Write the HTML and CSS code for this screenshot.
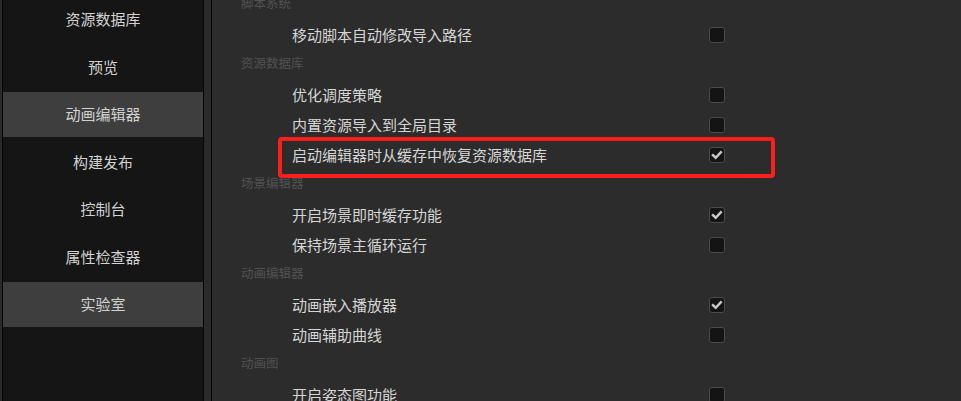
FILE: index.html
```html
<!DOCTYPE html>
<html lang="zh-CN">
<head>
<meta charset="UTF-8" />
<title>偏好设置 - 实验室</title>
<link rel="stylesheet" href="styles.css">
</head>
<body>

<div class="edge"></div>

<!-- 左侧导航 -->
<nav class="sidebar">
  <div class="nav-item">资源数据库</div>
  <div class="nav-item">预览</div>
  <div class="nav-item active">动画编辑器</div>
  <div class="nav-item">构建发布</div>
  <div class="nav-item">控制台</div>
  <div class="nav-item">属性检查器</div>
  <div class="nav-item active">实验室</div>
</nav>

<div class="gutter"></div>

<!-- 设置列表 -->
<main class="main">
  <div class="group-title">脚本系统</div>
  <div class="row"><span class="label">移动脚本自动修改导入路径</span><span class="box"></span></div>

  <div class="group-title">资源数据库</div>
  <div class="row"><span class="label">优化调度策略</span><span class="box"></span></div>
  <div class="row"><span class="label">内置资源导入到全局目录</span><span class="box"></span></div>
  <div class="row"><span class="label">启动编辑器时从缓存中恢复资源数据库</span><span class="box checked"><svg viewBox="0 0 16 16"><path d="M3.4 8.2 L6.5 11.1 L12.4 4.8"/></svg></span></div>

  <div class="group-title">场景编辑器</div>
  <div class="row"><span class="label">开启场景即时缓存功能</span><span class="box checked"><svg viewBox="0 0 16 16"><path d="M3.4 8.2 L6.5 11.1 L12.4 4.8"/></svg></span></div>
  <div class="row"><span class="label">保持场景主循环运行</span><span class="box"></span></div>

  <div class="group-title">动画编辑器</div>
  <div class="row"><span class="label">动画嵌入播放器</span><span class="box checked"><svg viewBox="0 0 16 16"><path d="M3.4 8.2 L6.5 11.1 L12.4 4.8"/></svg></span></div>
  <div class="row"><span class="label">动画辅助曲线</span><span class="box"></span></div>

  <div class="group-title">动画图</div>
  <div class="row"><span class="label">开启姿态图功能</span><span class="box"></span></div>
</main>

<!-- 红色标注框 -->
<div class="mark"></div>

</body>
</html>
```

FILE: styles.css
```css
:root {
  --main-bg: #2c2c2c;
  --side-bg: #151515;
  --active-bg: #3e3e3e;
  --text: #d6d6d6;
  --muted: #525252;
}

body {
  margin: 0;
  height: 401px;
  display: flex;
  overflow: hidden;
  background: var(--main-bg);
  font-family: "Noto Sans CJK SC", "Noto Sans", sans-serif;
  position: relative;
}

.edge {
  width: 2px;
  flex-shrink: 0;
  background: #2a2a2a;
  border-right: 1px solid #050505;
}

.sidebar {
  width: 200px;
  flex-shrink: 0;
  background: var(--side-bg);
  border-right: 1px solid #050505;
}

.nav-item {
  height: 45px;
  line-height: 43px;
  margin-bottom: 2.5px;
  text-align: center;
  font-size: 15px;
  color: #d2d2d2;
}

.nav-item:first-child {
  margin-top: -3px;
}

.nav-item.active {
  background: var(--active-bg);
}

.gutter {
  width: 7px;
  flex-shrink: 0;
  background: #2b2b2b;
  border-right: 1px solid #050505;
}

.main {
  flex: 1;
  padding-left: 29px;
  margin-top: -10.5px;
}

.group-title {
  height: 25px;
  line-height: 25px;
  margin-bottom: 5px;
  font-size: 12.5px;
  color: var(--muted);
}

.row {
  height: 30px;
  display: flex;
  align-items: center;
  padding-left: 51px;
}

.label {
  width: 417px;
  font-size: 15px;
  color: var(--text);
  line-height: 28px;
}

.box {
  width: 16px;
  height: 16px;
  box-sizing: border-box;
  border: 1px solid #4a4a4a;
  border-radius: 3px;
  background: #141414;
  display: flex;
}

.box svg {
  width: 14px;
  height: 14px;
  fill: none;
  stroke: #c8c8c8;
  stroke-width: 2.8;
  stroke-linecap: square;
}

.mark {
  position: absolute;
  left: 278px;
  top: 137px;
  width: 497px;
  height: 41px;
  box-sizing: border-box;
  border: 4px solid #ff1e1e;
  border-radius: 4px;
}
```
